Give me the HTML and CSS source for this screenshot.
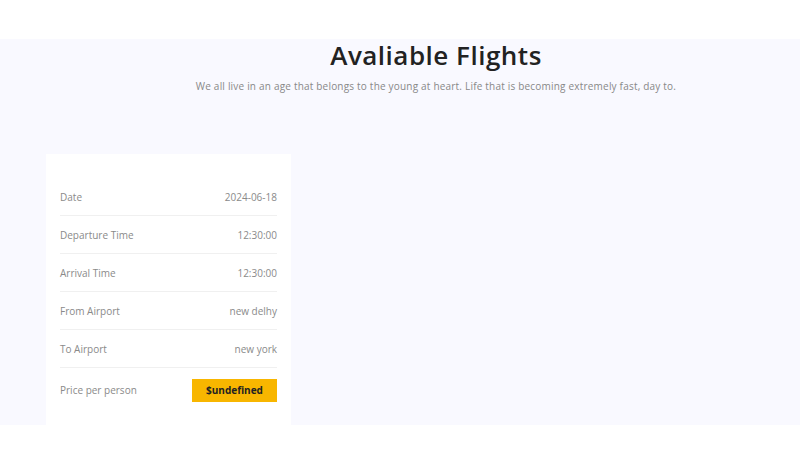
FILE: index.html
```html
<!DOCTYPE html>
<html lang="en">
  <head>
    <meta charset="UTF-8" />
    <meta name="viewport" content="width=device-width, initial-scale=1.0" />
    <link rel="stylesheet" href="styles.css">
    <title>Avaliable Flights</title>
  </head>
  <body>
    <header class="top-bar"></header>

    <section class="flights">
      <div class="section-title">
        <h1>Avaliable Flights</h1>
        <p>We all live in an age that belongs to the young at heart. Life that is becoming extremely fast, day to.</p>
      </div>

      <div class="flight-list">
        <div class="flight-card">
          <ul class="flight-info">
            <li><span>Date</span><span>2024-06-18</span></li>
            <li><span>Departure Time</span><span>12:30:00</span></li>
            <li><span>Arrival Time</span><span>12:30:00</span></li>
            <li><span>From Airport</span><span>new delhy</span></li>
            <li><span>To Airport</span><span>new york</span></li>
            <li class="price-row"><span>Price per person</span><a class="price-btn" href="#">$undefined</a></li>
          </ul>
        </div>
      </div>
    </section>
  </body>
</html>
```

FILE: styles.css
```css
/* 基本設定 */
* {
  margin: 0;
  padding: 0;
  box-sizing: border-box;
}

body {
  font-family: "Open Sans", "Noto Sans", sans-serif;
  background-color: #fff;
  color: #777;
}

.top-bar {
  height: 39px;
  background-color: #fff;
}

/* セクション */
.flights {
  display: flow-root;
  background-color: #f9f9ff;
  height: 386px;
  padding: 0 46px;
}

.section-title {
  text-align: center;
  padding-left: 72px;
}

.section-title h1 {
  font-size: 26px;
  font-weight: 600;
  color: #222;
  line-height: 36px;
  margin-top: -2px;
  letter-spacing: 0.5px;
}

.section-title p {
  font-size: 10px;
  color: #888;
  margin-top: 6px;
  letter-spacing: 0.2px;
}

.flight-list {
  margin-top: 61px;
  display: flex;
}

/* カード */
.flight-card {
  width: 245px;
  background-color: #fff;
  padding: 24px 14px 40px;
}

.flight-info {
  list-style: none;
}

.flight-info li {
  display: flex;
  justify-content: space-between;
  align-items: center;
  height: 38px;
  font-size: 10px;
  color: #8a8a8a;
  border-bottom: 1px solid #f0f0f0;
}

.flight-info li.price-row {
  border-bottom: none;
  height: 44px;
}

.price-btn {
  display: inline-block;
  width: 85px;
  height: 23px;
  line-height: 23px;
  text-align: center;
  background-color: #f8b600;
  color: #222;
  font-weight: 700;
  font-size: 10px;
  text-decoration: none;
}
```
